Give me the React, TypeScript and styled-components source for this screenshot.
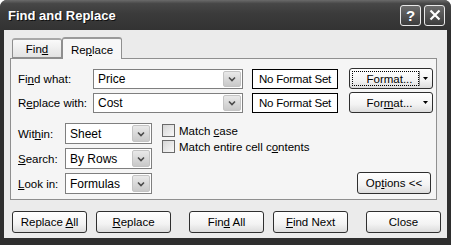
import React from "react";
import styled, { createGlobalStyle } from "styled-components";

const GlobalStyle = createGlobalStyle`
  html, body {
    margin: 0;
    padding: 0;
    background: #ffffff;
  }
  body {
    font-family: "Liberation Sans", Arial, sans-serif;
    font-size: 11.5px;
    color: #000;
  }
`;

const Window = styled.div`
  width: 451px;
  height: 245px;
  box-sizing: border-box;
  background: #2e2e2e;
  border-radius: 7px 7px 0 0;
  display: flex;
  flex-direction: column;
  overflow: hidden;
`;

const TitleBar = styled.div`
  height: 30px;
  flex: none;
  display: flex;
  align-items: center;
  padding: 0 6px 0 8px;
  background: linear-gradient(180deg, #6a6a6a 0%, #474747 12%, #3b3b3b 45%, #333 100%);
`;

const Title = styled.div`
  flex: 1;
  color: #fff;
  font-weight: bold;
  font-size: 13px;
  text-shadow: 1px 1px 0 #111;
`;

const CaptionButton = styled.div`
  width: 19px;
  height: 19px;
  margin-left: 3px;
  border: 1px solid #e8e8e8;
  border-radius: 3px;
  background: linear-gradient(180deg, #6c6c6c, #3c3c3c);
  color: #fff;
  display: flex;
  align-items: center;
  justify-content: center;
  font-weight: bold;
  font-size: 15px;
`;

const Body = styled.div`
  flex: 1;
  margin: 0 4px 7px 4px;
  background: #ebebeb;
  padding: 7px 10px 0 6px;
  display: flex;
  flex-direction: column;
`;

const Tabs = styled.div`
  display: flex;
  align-items: flex-end;
  padding-left: 2px;
  height: 21px;
`;

const Tab = styled.div<{ $active?: boolean }>`
  box-sizing: border-box;
  height: ${p => (p.$active ? 22 : 20)}px;
  width: ${p => (p.$active ? 60 : 50)}px;
  margin-bottom: ${p => (p.$active ? -1 : 0)}px;
  border: 1px solid #8f8f8f;
  border-bottom: ${p => (p.$active ? "none" : "1px solid #8f8f8f")};
  border-top: 2px solid ${p => (p.$active ? "#9a9a9a" : "#a8a8a8")};
  border-radius: 3px 3px 0 0;
  background: ${p => (p.$active ? "#f7f7f7" : "linear-gradient(180deg, #fafafa, #e3e3e3)")};
  display: flex;
  align-items: center;
  justify-content: center;
  padding-top: 1px;
  position: relative;
  z-index: ${p => (p.$active ? 2 : 1)};
`;

const Panel = styled.div`
  box-sizing: border-box;
  height: 142px;
  border: 1px solid #8f8f8f;
  background: #f5f5f5;
  padding: 9px 5px 0 7px;
  display: flex;
  flex-direction: column;
`;

const TopRows = styled.div`
  display: flex;
  flex-direction: column;
  gap: 3px;
`;

const Row = styled.div`
  display: flex;
  align-items: center;
`;

const Label = styled.div<{ $w: number }>`
  width: ${p => p.$w}px;
  flex: none;
`;

const ComboBox = styled.div<{ $w: number; $h: number }>`
  box-sizing: border-box;
  width: ${p => p.$w}px;
  height: ${p => p.$h}px;
  border: 1px solid #7f7f7f;
  background: #fff;
  display: flex;
  align-items: stretch;
  flex: none;
`;

const ComboText = styled.div`
  flex: 1;
  display: flex;
  align-items: center;
  padding-left: 4px;
  font-size: 12px;
`;

const DropButton = styled.div`
  width: 16px;
  margin: 1px;
  border: 1px solid #c4c4c4;
  border-radius: 2px;
  background: linear-gradient(180deg, #e9e9e9, #c9c9c9);
  display: flex;
  align-items: center;
  justify-content: center;
`;

const FormatBox = styled.div`
  box-sizing: border-box;
  width: 86px;
  height: 20px;
  margin-left: 9px;
  border: 1px solid #000;
  background: #fff;
  display: flex;
  align-items: center;
  justify-content: center;
  flex: none;
  letter-spacing: -0.2px;
`;

const Button = styled.div<{ $w: number; $h?: number }>`
  box-sizing: border-box;
  width: ${p => p.$w}px;
  height: ${p => p.$h ?? 22}px;
  border: 1px solid #2f2f2f;
  border-radius: 3px;
  background: linear-gradient(180deg, #ffffff 0%, #f3f3f3 60%, #dcdcdc 100%);
  display: flex;
  align-items: center;
  justify-content: center;
  flex: none;
`;

const SplitButton = styled(Button)`
  margin-left: 11px;
  justify-content: flex-start;
  padding: 2px;
`;

const SplitLabel = styled.div<{ $focus?: boolean }>`
  flex: 1;
  height: 100%;
  box-sizing: border-box;
  border: 1px dotted ${p => (p.$focus ? "#000" : "transparent")};
  display: flex;
  align-items: center;
  justify-content: center;
  padding-left: 8px;
`;

const SplitArrow = styled.div<{ $divider?: boolean }>`
  width: 10px;
  height: 100%;
  border-left: 1px solid ${p => (p.$divider ? "#8a8a8a" : "transparent")};
  display: flex;
  align-items: center;
  justify-content: center;
`;

const Lower = styled.div`
  display: flex;
  margin-top: 10px;
  flex: 1;
`;

const LeftGrid = styled.div`
  display: flex;
  flex-direction: column;
  gap: 4px;
`;

const Checks = styled.div`
  display: flex;
  flex-direction: column;
  gap: 3px;
  margin-left: 10px;
  padding-top: 1px;
`;

const CheckRow = styled.div`
  display: flex;
  align-items: center;
  height: 13px;
`;

const CheckBox = styled.div`
  box-sizing: border-box;
  width: 13px;
  height: 13px;
  border: 1px solid #6a6a6a;
  background: linear-gradient(135deg, #d6d6d6, #f8f8f8);
  margin-right: 4px;
`;

const OptionsWrap = styled.div`
  margin-left: auto;
  align-self: flex-start;
  margin-top: 49px;
`;

const Footer = styled.div`
  display: flex;
  margin-top: 11px;
  padding-left: 2px;
`;

const FooterButton = styled(Button)<{ $gap: number }>`
  margin-left: ${p => p.$gap}px;
`;

function Chevron() {
  return (
    <svg width="8" height="6" viewBox="0 0 8 6">
      <path d="M1 1.5L4 4.5L7 1.5" stroke="#4a4a4a" strokeWidth="1.6" fill="none" />
    </svg>
  );
}

function SmallArrow() {
  return (
    <svg width="5" height="3" viewBox="0 0 5 3">
      <path d="M0 0H5L2.5 3Z" fill="#000" />
    </svg>
  );
}

function Combo({ w, h, value }: { w: number; h: number; value: string }) {
  return (
    <ComboBox $w={w} $h={h}>
      <ComboText>{value}</ComboText>
      <DropButton>
        <Chevron />
      </DropButton>
    </ComboBox>
  );
}

export default function App() {
  return (
    <>
      <GlobalStyle />
      <Window>
        <TitleBar>
          <Title>Find and Replace</Title>
          <CaptionButton>?</CaptionButton>
          <CaptionButton>
            <svg width="12" height="12" viewBox="0 0 12 12">
              <path d="M1.5 1.5L10.5 10.5M10.5 1.5L1.5 10.5" stroke="#fff" strokeWidth="2.2" />
            </svg>
          </CaptionButton>
        </TitleBar>
        <Body>
          <Tabs>
            <Tab>
              <span>Fin<u>d</u></span>
            </Tab>
            <Tab $active>
              <span>Re<u>p</u>lace</span>
            </Tab>
          </Tabs>
          <Panel>
            <TopRows>
              <Row>
                <Label $w={75}>
                  Fi<u>n</u>d what:
                </Label>
                <Combo w={150} h={20} value="Price" />
                <FormatBox>No Format Set</FormatBox>
                <SplitButton $w={84} $h={21}>
                  <SplitLabel $focus>Format...</SplitLabel>
                  <SplitArrow $divider>
                    <SmallArrow />
                  </SplitArrow>
                </SplitButton>
              </Row>
              <Row>
                <Label $w={75}>
                  R<u>e</u>place with:
                </Label>
                <Combo w={150} h={20} value="Cost" />
                <FormatBox>No Format Set</FormatBox>
                <SplitButton $w={84} $h={21}>
                  <SplitLabel>
                    <span>For<u>m</u>at...</span>
                  </SplitLabel>
                  <SplitArrow>
                    <SmallArrow />
                  </SplitArrow>
                </SplitButton>
              </Row>
            </TopRows>
            <Lower>
              <LeftGrid>
                <Row>
                  <Label $w={47}>
                    Wit<u>h</u>in:
                  </Label>
                  <Combo w={87} h={21} value="Sheet" />
                </Row>
                <Row>
                  <Label $w={47}>
                    <u>S</u>earch:
                  </Label>
                  <Combo w={87} h={21} value="By Rows" />
                </Row>
                <Row>
                  <Label $w={47}>
                    <u>L</u>ook in:
                  </Label>
                  <Combo w={87} h={21} value="Formulas" />
                </Row>
              </LeftGrid>
              <Checks>
                <CheckRow>
                  <CheckBox />
                  <span>Match <u>c</u>ase</span>
                </CheckRow>
                <CheckRow>
                  <CheckBox />
                  <span>Match entire cell c<u>o</u>ntents</span>
                </CheckRow>
              </Checks>
              <OptionsWrap>
                <Button $w={74} $h={22}>
                  <span>Op<u>t</u>ions &lt;&lt;</span>
                </Button>
              </OptionsWrap>
            </Lower>
          </Panel>
          <Footer>
            <FooterButton $w={75} $gap={0}>
              <span>Replace <u>A</u>ll</span>
            </FooterButton>
            <FooterButton $w={75} $gap={9}>
              <span><u>R</u>eplace</span>
            </FooterButton>
            <FooterButton $w={75} $gap={18}>
              <span>Fin<u>d</u> All</span>
            </FooterButton>
            <FooterButton $w={75} $gap={9}>
              <span><u>F</u>ind Next</span>
            </FooterButton>
            <FooterButton $w={75} $gap={18}>
              <span>Close</span>
            </FooterButton>
          </Footer>
        </Body>
      </Window>
    </>
  );
}
